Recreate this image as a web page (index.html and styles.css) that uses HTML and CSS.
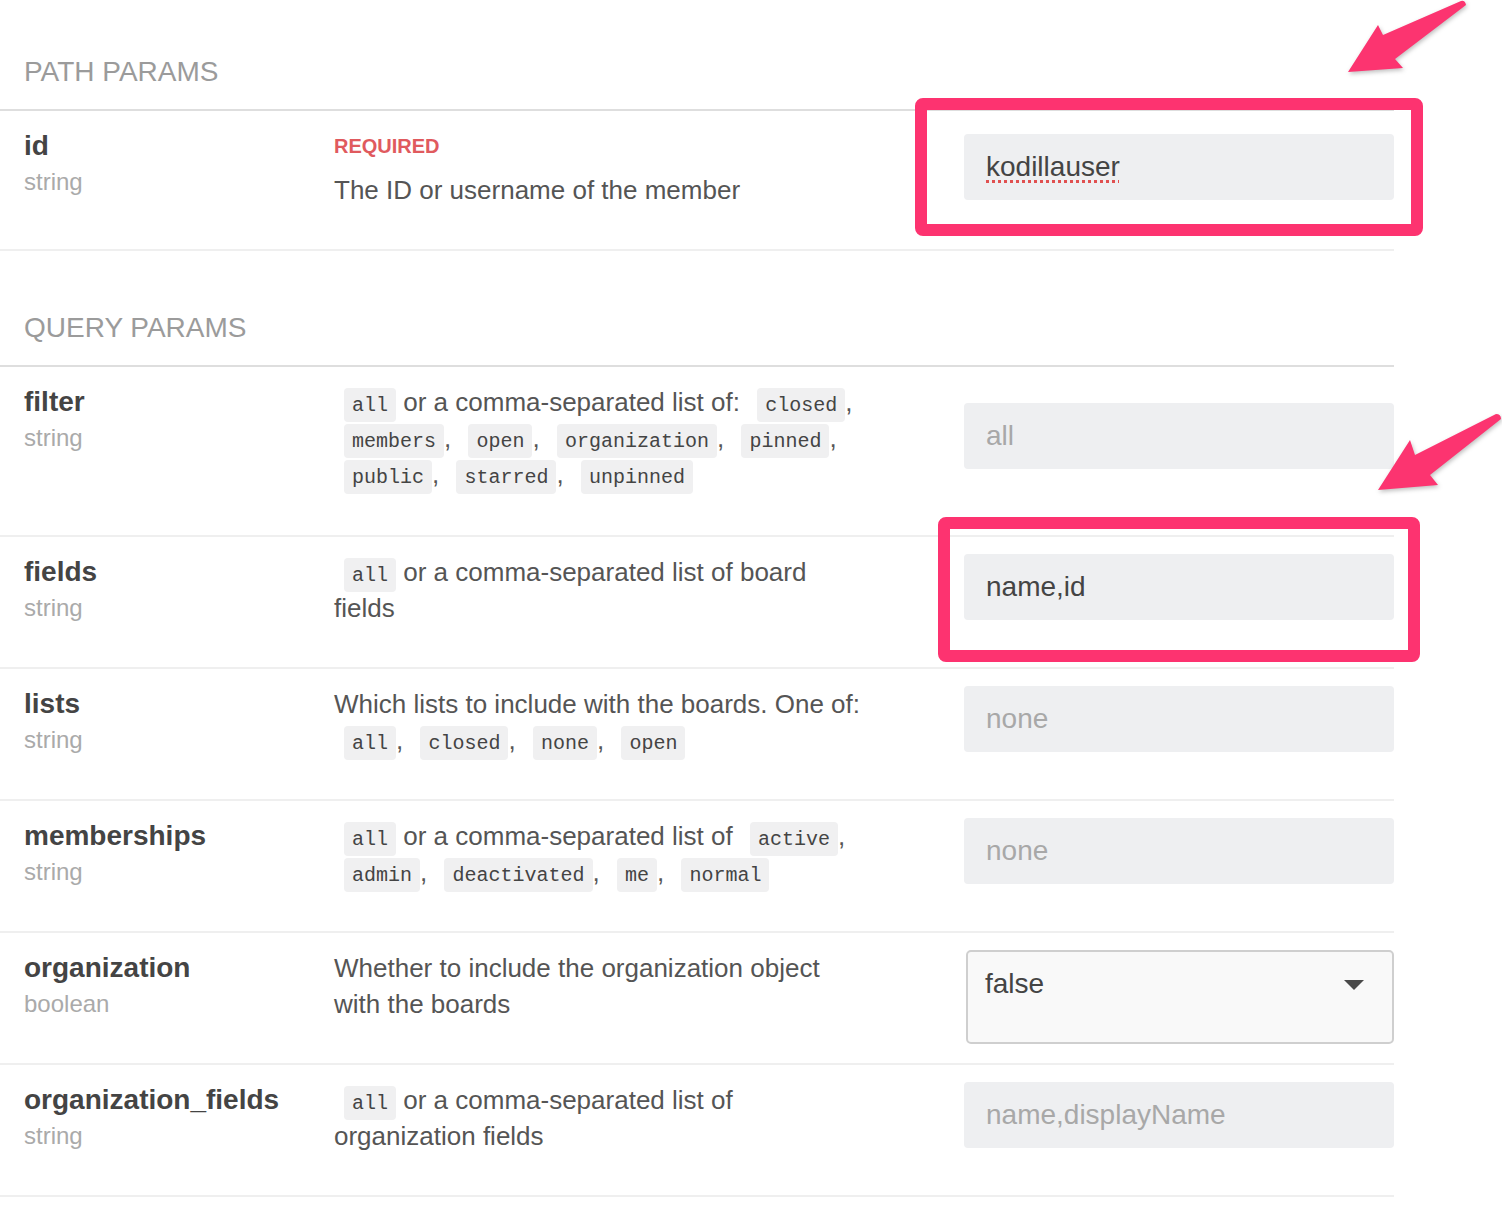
FILE: index.html
```html
<!DOCTYPE html>
<html>
<head>
<meta charset="utf-8">
<link rel="stylesheet" href="styles.css">
</head>
<body>
<div class="page">
  <h2 class="section-title first">PATH PARAMS</h2>
  <div class="row row-id">
    <div class="name"><div class="pname">id</div><div class="ptype">string</div></div>
    <div class="desc"><div class="required">REQUIRED</div><div>The ID or username of the member</div></div>
    <div class="field"><span class="value spell">kodillauser</span></div>
    <div class="highlight hl-1"></div>
  </div>

  <h2 class="section-title">QUERY PARAMS</h2>
  <div class="row row-filter">
    <div class="name"><div class="pname">filter</div><div class="ptype">string</div></div>
    <div class="desc"><code>all</code> or a comma-separated list of: <code>closed</code>, <code>members</code>, <code>open</code>, <code>organization</code>, <code>pinned</code>, <code>public</code>, <code>starred</code>, <code>unpinned</code></div>
    <div class="field"><span class="placeholder">all</span></div>
  </div>
  <div class="row">
    <div class="name"><div class="pname">fields</div><div class="ptype">string</div></div>
    <div class="desc"><code>all</code> or a comma-separated list of board fields</div>
    <div class="field"><span class="value">name,id</span></div>
    <div class="highlight hl-2"></div>
  </div>
  <div class="row">
    <div class="name"><div class="pname">lists</div><div class="ptype">string</div></div>
    <div class="desc">Which lists to include with the boards. One of: <code>all</code>, <code>closed</code>, <code>none</code>, <code>open</code></div>
    <div class="field"><span class="placeholder">none</span></div>
  </div>
  <div class="row">
    <div class="name"><div class="pname">memberships</div><div class="ptype">string</div></div>
    <div class="desc"><code>all</code> or a comma-separated list of <code>active</code>, <code>admin</code>, <code>deactivated</code>, <code>me</code>, <code>normal</code></div>
    <div class="field"><span class="placeholder">none</span></div>
  </div>
  <div class="row">
    <div class="name"><div class="pname">organization</div><div class="ptype">boolean</div></div>
    <div class="desc">Whether to include the organization object with the boards</div>
    <div class="select"><span class="value">false</span><span class="caret"></span></div>
  </div>
  <div class="row">
    <div class="name"><div class="pname">organization_fields</div><div class="ptype">string</div></div>
    <div class="desc"><code>all</code> or a comma-separated list of organization fields</div>
    <div class="field"><span class="placeholder">name,displayName</span></div>
  </div>

  <svg class="arrow arrow-1" width="130" height="80" viewBox="0 0 130 80"><path d="M121,1 Q125,0 126,5 L55,59 L63,68 L8,72 L38,25 L43,35 Z" fill="#fc3470"/></svg>
  <svg class="arrow arrow-2" width="142" height="95" viewBox="0 0 142 95"><path d="M136,9 Q141,9 141,14 L70,70 L78,80 L18,85 L50,35 L55,50 Z" fill="#fc3470"/></svg>
</div>
</body>
</html>
```

FILE: styles.css
```css
html, body {
  margin: 0;
  padding: 0;
  background: #ffffff;
}

.page {
  position: relative;
  width: 1394px;
  font-family: "Liberation Sans", Arial, Helvetica, sans-serif;
  color: #555;
}

.section-title {
  margin: 0;
  padding: 59px 0 19px 24px;
  font-size: 28px;
  line-height: 36px;
  font-weight: normal;
  color: #9b9b9b;
  border-bottom: 2px solid #dedede;
}

.section-title.first {
  padding-top: 54px;
}

.row {
  position: relative;
  display: flex;
  align-items: flex-start;
  padding: 17px 0 17px 24px;
  border-bottom: 2px solid #efefef;
}

.row-filter {
  padding-bottom: 19px;
}

.name {
  flex: none;
  width: 310px;
  padding-bottom: 24px;
}

.pname {
  font-size: 28px;
  line-height: 36px;
  font-weight: bold;
  color: #444;
}

.ptype {
  font-size: 24px;
  line-height: 36px;
  color: #aaa;
}

.desc {
  flex: none;
  width: 532px;
  padding-bottom: 24px;
  font-size: 26px;
  line-height: 36px;
  color: #555;
}

.required {
  font-size: 20px;
  line-height: 36px;
  font-weight: bold;
  color: #e05a5e;
  margin-bottom: 8px;
}

code {
  font-family: "Liberation Mono", "Courier New", monospace;
  font-size: 20px;
  line-height: 20px;
  color: #444;
  background: #f0f0f1;
  border-radius: 4px;
  padding: 6px 8px 5px;
  margin-left: 10px;
}

.field {
  flex: none;
  margin-left: auto;
  margin-top: 0;
  width: 430px;
  height: 66px;
  box-sizing: border-box;
  padding: 0 22px;
  background: #eeeff1;
  border-radius: 4px;
  display: flex;
  align-items: center;
  font-size: 28px;
}

.row-id .field {
  margin-top: 6px;
}

.row-filter .field {
  margin-top: 19px;
}

.value {
  color: #444;
}

.placeholder {
  color: #a8a8a8;
}

.spell {
  text-decoration: underline dotted #e05050;
  text-decoration-thickness: 3px;
  text-underline-offset: 4px;
}

.select {
  flex: none;
  margin-left: auto;
  margin-top: 0;
  margin-bottom: 2px;
  width: 428px;
  height: 94px;
  box-sizing: border-box;
  border: 2px solid #cfcfcf;
  border-radius: 5px;
  background: #f9f9f9;
  padding: 14px 28px 0 17px;
  display: flex;
  justify-content: space-between;
  align-items: flex-start;
  font-size: 28px;
  line-height: 36px;
}

.caret {
  margin-top: 14px;
  width: 0;
  height: 0;
  border-left: 10px solid transparent;
  border-right: 10px solid transparent;
  border-top: 10px solid #4a4a4a;
}

.highlight {
  position: absolute;
  box-sizing: border-box;
  border: 12px solid #fd3370;
  border-radius: 8px;
}

.hl-1 {
  left: 915px;
  top: -13px;
  width: 508px;
  height: 138px;
}

.hl-2 {
  left: 938px;
  top: -20px;
  width: 482px;
  height: 145px;
}

.arrow {
  position: absolute;
  filter: drop-shadow(1px 2px 2px rgba(0, 0, 0, 0.25));
}

.arrow-1 {
  left: 1340px;
  top: 0;
}

.arrow-2 {
  left: 1360px;
  top: 405px;
}
```
